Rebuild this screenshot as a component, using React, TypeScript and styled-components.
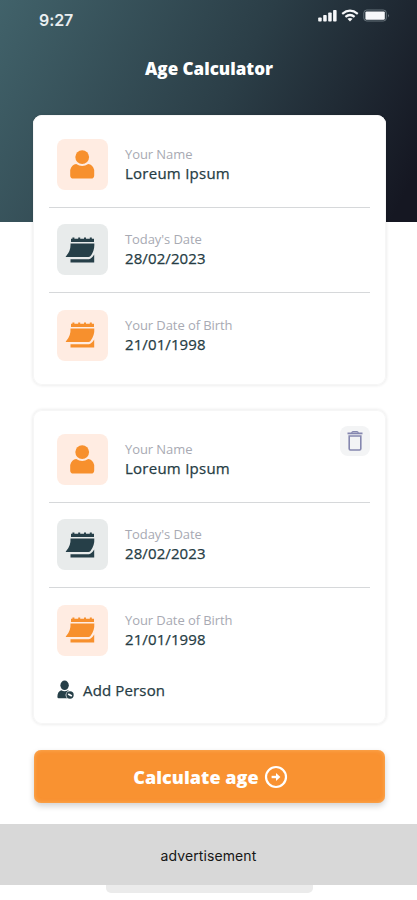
import React from "react";
import styled, { createGlobalStyle } from "styled-components";

const GlobalStyle = createGlobalStyle`
  * { box-sizing: border-box; }
  body { margin: 0; background: #fff; }
`;

const Screen = styled.div`
  width: 417px;
  height: 900px;
  overflow: hidden;
  display: flex;
  flex-direction: column;
  font-family: "Open Sans", "Noto Sans", sans-serif;
  background: #fff linear-gradient(117deg, #41626a 0%, #2b3e47 52%, #151722 95%) 0 0 / 100% 222px no-repeat;
`;

const StatusBar = styled.header`
  height: 40px;
  flex: none;
  display: flex;
  justify-content: space-between;
  padding: 9px 27px 0 39px;
  color: #e9eef0;
`;

const Clock = styled.span`
  font: 600 16px/23px Inter, sans-serif;
  letter-spacing: -0.1px;
`;

const Title = styled.h1`
  margin: 0;
  height: 75px;
  flex: none;
  padding: 17px 0 0 1px;
  text-align: center;
  color: #fff;
  font-size: 17px;
  line-height: 24px;
  font-weight: 800;
`;

const Card = styled.section<{ $height: number }>`
  height: ${(p) => p.$height}px;
  flex: none;
  margin: 0 31px 25px 33px;
  padding: 24px 16px 0;
  border-radius: 9px;
  background: #fff;
  box-shadow: inset 0 0 0 1px #f6f6f6, 0 0 3px 1px rgba(0, 0, 0, 0.07);
`;

const Row = styled.div`
  display: flex;
  height: 67.6px;
  padding-left: 8px;
  & + & {
    height: 85.2px;
    padding-top: 16.6px;
    border-top: 1.5px solid #d6d8da;
  }
  & + & + & {
    height: 69px;
    padding-top: 17px;
  }
`;

const Tile = styled.div<{ $dark?: boolean }>`
  width: 51px;
  height: 51px;
  flex: none;
  display: grid;
  place-items: center;
  border-radius: 8px;
  background: ${(p) => (p.$dark ? "#e8ebeb" : "#ffece2")};
  color: ${(p) => (p.$dark ? "#263f48" : "#f7902d")};
`;

const Field = styled.div`
  flex: 1;
  padding: 5.2px 0 0 17px;
`;

const Label = styled.div`
  font-size: 13px;
  line-height: 20px;
  letter-spacing: -0.08px;
  color: #a8aab3;
`;

const Value = styled.div<{ $spacing?: number }>`
  font-size: 15px;
  line-height: 19px;
  letter-spacing: ${(p) => p.$spacing ?? 0.1}px;
  color: #263c44;
  -webkit-text-stroke: 0.25px #263c44;
`;

const DeleteButton = styled.button`
  width: 30px;
  height: 30px;
  margin-top: -8px;
  padding: 0;
  border: 0;
  border-radius: 8px;
  display: grid;
  place-items: center;
  background: #f3f4f5;
`;

const AddPerson = styled.button`
  display: flex;
  align-items: center;
  gap: 8px;
  height: 24px;
  margin-top: 22px;
  padding: 0 0 0 8px;
  border: 0;
  background: none;
  color: #263c44;
  font: 400 15px/24px "Open Sans", sans-serif;
  letter-spacing: 0.15px;
  -webkit-text-stroke: 0.25px #263c44;
`;

const Calculate = styled.button`
  flex: none;
  height: 53px;
  margin: 1px 32px 21px 34px;
  padding: 0 0 0 2px;
  border: 0;
  border-radius: 7px;
  display: flex;
  align-items: center;
  justify-content: center;
  gap: 5px;
  background: #f99231;
  color: #fff;
  font: 800 18px/24px "Open Sans", sans-serif;
  letter-spacing: 0.05px;
  box-shadow: inset 0 0 4px rgba(255, 190, 120, 0.65), 0 3px 6px rgba(0, 0, 0, 0.18);
`;

const Advertisement = styled.aside`
  flex: none;
  height: 61px;
  background: #d8d8d8;
  color: #161616;
  text-align: center;
  font: 400 14px/64px Inter, sans-serif;
  letter-spacing: 0.1px;
`;

const HomeIndicator = styled.div`
  width: 207px;
  height: 8px;
  flex: none;
  margin-left: 106px;
  border-radius: 0 0 5px 5px;
  background: #ebebeb;
`;

const StatusIcons = () => (
  <svg width="73" height="16" viewBox="0 0 73 16" fill="#f7f8fa">
    <rect x="1.2" y="8.5" width="3.5" height="4" rx="0.8" />
    <rect x="6.2" y="6" width="3.5" height="6.5" rx="0.8" />
    <rect x="11.2" y="3.4" width="3.5" height="9.1" rx="0.8" />
    <rect x="16.1" y="1" width="3.5" height="11.5" rx="0.8" />
    <g fill="none" stroke="#f7f8fa" strokeWidth="2.2">
      <path d="M25.2 4.8Q33 -1.6 40.8 4.8" />
      <path d="M28.4 7.8Q33 4.2 37.6 7.8" />
    </g>
    <path d="M30.4 9.8Q33 8 35.6 9.8L33 12.4Z" />
    <rect x="46.8" y="1" width="22.5" height="11" rx="3" fill="none" stroke="#77848b" strokeWidth="0.8" />
    <rect x="48.4" y="2.4" width="19.4" height="8.4" rx="1.2" />
    <path d="M71 5v3.5q1.5-1.7 0-3.5" fill="#96a0a6" />
  </svg>
);

const PersonIcon = () => (
  <svg width="27" height="30" viewBox="0 0 27 30" fill="currentColor">
    <circle cx="13.2" cy="7.1" r="6.9" />
    <path d="M7.2 13.9Q13.2 17.9 19.2 13.9Q23.7 14.2 25.2 20V25.5Q25.2 28.6 22 28.6H4.4Q1.2 28.6 1.2 25.5V20Q2.7 14.2 7.2 13.9Z" />
  </svg>
);

const CalendarIcon = () => (
  <svg width="35" height="26" viewBox="0 0 35 26" fill="currentColor">
    <path d="M6 1.8h1.4V.4h2v1.4h3.8V.4h2v1.4h3.8V.4h2v1.4h3.8V.4h2v1.4H29v3.3H6Z" />
    <path d="M5.5 6.5H29.3Q29.8 13.5 25.3 19.3Q24.7 20.1 23.5 20.1H1.2Q.3 20.1 1 19.2Q6 14 5.5 6.5Z" />
    <path d="M29.2 17.5V25.4H5.5V22.3H24Q26.5 21.8 29.2 17.5Z" />
  </svg>
);

const TrashIcon = () => (
  <svg width="18" height="22" viewBox="0 0 18 22" fill="none" stroke="#8587af">
    <path d="M1.5 3.4H16.5" strokeWidth="1.8" />
    <path d="M5.7 3.2Q6 1.6 7 1.6H11Q12 1.6 12.3 3.2" strokeWidth="1.2" />
    <path d="M3.2 6H14.8V18.8Q14.8 20 13.6 20H4.4Q3.2 20 3.2 18.8Z" strokeWidth="1.6" />
  </svg>
);

const AddPersonIcon = () => (
  <svg width="18" height="20" viewBox="0 0 18 20" fill="#263f48">
    <ellipse cx="7.6" cy="5.3" rx="4.2" ry="4.8" />
    <path d="M4.2 10.3Q7.6 12.3 11 10.3L14 12.2V18.3H1.6Q.4 18.3 .4 16.8Q.4 11.7 4.2 10.3Z" />
    <circle cx="13" cy="15" r="4.4" fill="#fff" />
    <circle cx="13" cy="15" r="3.7" />
    <path d="M11.2 14L14.8 16" stroke="#fff" strokeWidth="1.8" />
  </svg>
);

const ArrowIcon = () => (
  <svg width="24" height="24" viewBox="0 0 24 24" fill="none" stroke="#fff" strokeWidth="2.2">
    <circle cx="12" cy="12" r="10" />
    <path d="M7.6 12H14" strokeWidth="2.4" />
    <path d="M12 8L16.4 12L12 16Z" fill="#fff" stroke="none" />
  </svg>
);

const PersonRows = ({ action }: { action?: React.ReactNode }) => (
  <>
    <Row>
      <Tile><PersonIcon /></Tile>
      <Field><Label>Your Name</Label><Value $spacing={0.25}>Loreum Ipsum</Value></Field>
      {action}
    </Row>
    <Row>
      <Tile $dark><CalendarIcon /></Tile>
      <Field><Label>Today's Date</Label><Value>28/02/2023</Value></Field>
    </Row>
    <Row>
      <Tile><CalendarIcon /></Tile>
      <Field><Label>Your Date of Birth</Label><Value>21/01/1998</Value></Field>
    </Row>
  </>
);

export default function App() {
  return (
    <Screen>
      <GlobalStyle />
      <StatusBar><Clock>9:27</Clock><StatusIcons /></StatusBar>
      <Title>Age Calculator</Title>
      <Card $height={270}><PersonRows /></Card>
      <Card $height={314}>
        <PersonRows action={<DeleteButton aria-label="Delete person"><TrashIcon /></DeleteButton>} />
        <AddPerson><AddPersonIcon />Add Person</AddPerson>
      </Card>
      <Calculate>Calculate age<ArrowIcon /></Calculate>
      <Advertisement>advertisement</Advertisement>
      <HomeIndicator />
    </Screen>
  );
}
